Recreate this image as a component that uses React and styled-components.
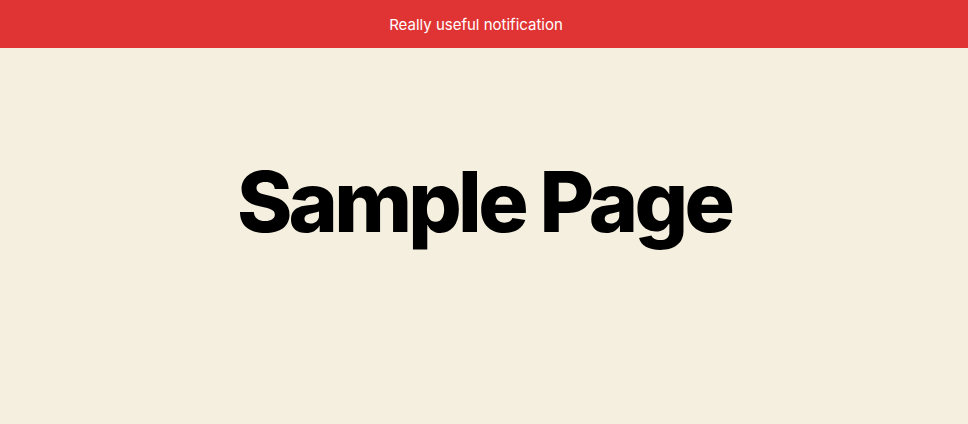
import React from 'react';
import styled, { createGlobalStyle } from 'styled-components';

const GlobalStyle = createGlobalStyle`
  html, body {
    margin: 0;
    padding: 0;
    background: #f5efdf;
    font-family: Inter, "Noto Sans", sans-serif;
  }
`;

const Page = styled.div`
  min-height: 100vh;
  display: flex;
  flex-direction: column;
`;

const NotificationBar = styled.div`
  background: #e03434;
  color: white;
  height: 48px;
  display: flex;
  align-items: center;
  justify-content: center;
  padding-right: 16px;
  font-size: 15px;
  font-weight: 400;
`;

const Main = styled.main`
  display: flex;
  justify-content: center;
  padding-top: 104px;
`;

const Title = styled.h1`
  margin: 0;
  font-size: 84px;
  font-weight: 800;
  letter-spacing: -0.045em;
  line-height: 1.2;
  color: #000;
`;

const App = () => {
  return (
    <Page>
      <GlobalStyle />
      <NotificationBar>Really useful notification</NotificationBar>
      <Main>
        <Title>Sample Page</Title>
      </Main>
    </Page>
  );
};

export default App;
